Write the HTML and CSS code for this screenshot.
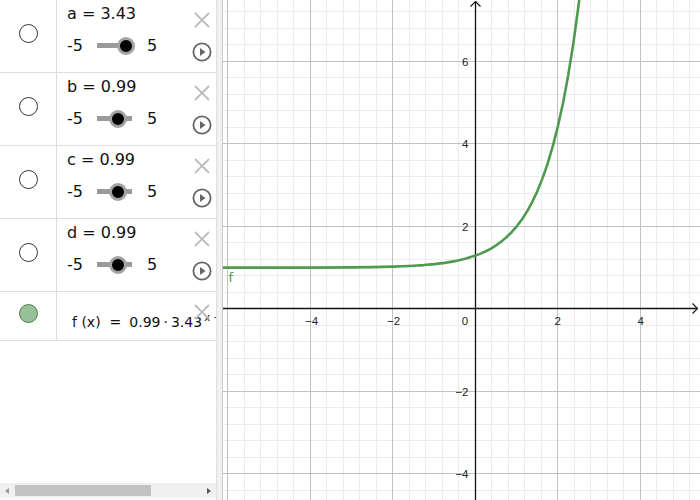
FILE: index.html
```html
<!DOCTYPE html>
<html>
<head>
<meta charset="utf-8">
<link rel="stylesheet" href="styles.css">
</head>
<body>
<div class="app">
  <div class="algebra">
    <div class="row">
      <div class="marble-col"><div class="marble"></div></div>
      <div class="content">
        <div class="main">
          <div class="title">a = 3.43</div>
          <div class="slider-row">
            <span>-5</span>
            <div class="slider"><div class="track"></div><div class="knob" style="left:20.5px"></div></div>
            <span class="max">5</span>
          </div>
        </div>
        <div class="icons">
          <svg class="x-icon" width="16" height="16" viewBox="0 0 16 16"><path d="M1 1L15 15M15 1L1 15"/></svg>
          <svg class="play" width="20" height="20" viewBox="0 0 20 20"><circle cx="10" cy="10" r="8.6"/><path d="M8 6V14L13.5 10Z"/></svg>
        </div>
      </div>
    </div>
    <div class="row">
      <div class="marble-col"><div class="marble"></div></div>
      <div class="content">
        <div class="main">
          <div class="title">b = 0.99</div>
          <div class="slider-row">
            <span>-5</span>
            <div class="slider"><div class="track"></div><div class="knob" style="left:12px"></div></div>
            <span class="max">5</span>
          </div>
        </div>
        <div class="icons">
          <svg class="x-icon" width="16" height="16" viewBox="0 0 16 16"><path d="M1 1L15 15M15 1L1 15"/></svg>
          <svg class="play" width="20" height="20" viewBox="0 0 20 20"><circle cx="10" cy="10" r="8.6"/><path d="M8 6V14L13.5 10Z"/></svg>
        </div>
      </div>
    </div>
    <div class="row">
      <div class="marble-col"><div class="marble"></div></div>
      <div class="content">
        <div class="main">
          <div class="title">c = 0.99</div>
          <div class="slider-row">
            <span>-5</span>
            <div class="slider"><div class="track"></div><div class="knob" style="left:12px"></div></div>
            <span class="max">5</span>
          </div>
        </div>
        <div class="icons">
          <svg class="x-icon" width="16" height="16" viewBox="0 0 16 16"><path d="M1 1L15 15M15 1L1 15"/></svg>
          <svg class="play" width="20" height="20" viewBox="0 0 20 20"><circle cx="10" cy="10" r="8.6"/><path d="M8 6V14L13.5 10Z"/></svg>
        </div>
      </div>
    </div>
    <div class="row">
      <div class="marble-col"><div class="marble"></div></div>
      <div class="content">
        <div class="main">
          <div class="title">d = 0.99</div>
          <div class="slider-row">
            <span>-5</span>
            <div class="slider"><div class="track"></div><div class="knob" style="left:12px"></div></div>
            <span class="max">5</span>
          </div>
        </div>
        <div class="icons">
          <svg class="x-icon" width="16" height="16" viewBox="0 0 16 16"><path d="M1 1L15 15M15 1L1 15"/></svg>
          <svg class="play" width="20" height="20" viewBox="0 0 20 20"><circle cx="10" cy="10" r="8.6"/><path d="M8 6V14L13.5 10Z"/></svg>
        </div>
      </div>
    </div>
    <div class="row fn">
      <div class="marble-col"><div class="marble filled"></div></div>
      <div class="content">
        <div class="fn-text">f (x)<span class="eq">=</span>0.99<span class="dot">·</span>3.43<sup>x − 0.99</sup> + 0.99</div>
      </div>
      <svg class="x-icon fn-x" width="16" height="16" viewBox="0 0 16 16"><path d="M1 1L15 15M15 1L1 15"/></svg>
    </div>
    <div class="hscroll">
      <span class="arr-left"></span>
      <span class="thumb"></span>
      <span class="arr-right"></span>
    </div>
  </div>
  <div class="split"></div>
  <svg class="graph" width="477" height="500" viewBox="0 0 477 500">
    <path class="minor" d="M21.5 0V500M37.5 0V500M54.5 0V500M70.5 0V500M103.5 0V500M120.5 0V500M136.5 0V500M153.5 0V500M186.5 0V500M202.5 0V500M219.5 0V500M235.5 0V500M268.5 0V500M285.5 0V500M301.5 0V500M318.5 0V500M351.5 0V500M367.5 0V500M384.5 0V500M400.5 0V500M433.5 0V500M450.5 0V500M466.5 0V500M0 11.5H477M0 28.5H477M0 44.5H477M0 77.5H477M0 94.5H477M0 110.5H477M0 127.5H477M0 160.5H477M0 176.5H477M0 193.5H477M0 209.5H477M0 242.5H477M0 259.5H477M0 275.5H477M0 292.5H477M0 325.5H477M0 341.5H477M0 358.5H477M0 374.5H477M0 407.5H477M0 424.5H477M0 440.5H477M0 457.5H477M0 490.5H477"/>
    <path class="major" d="M4.5 0V500M87.5 0V500M169.5 0V500M334.5 0V500M417.5 0V500M0 61.5H477M0 143.5H477M0 226.5H477M0 391.5H477M0 473.5H477"/>
    <path class="axis" d="M252.5 1.5V500M0 308.5H475"/>
    <path class="arrow" d="M247.5 6.5L252.5 1.5L257.5 6.5M469.5 303.5L474.5 308.5L469.5 313.5"/>
    <g class="labels">
      <text x="88.5" y="324.5" text-anchor="middle">−4</text>
      <text x="170.5" y="324.5" text-anchor="middle">−2</text>
      <text x="242" y="324.5" text-anchor="middle">0</text>
      <text x="334.8" y="324.5" text-anchor="middle">2</text>
      <text x="417.8" y="324.5" text-anchor="middle">4</text>
      <text x="245.5" y="66" text-anchor="end">6</text>
      <text x="245.5" y="148" text-anchor="end">4</text>
      <text x="245.5" y="231" text-anchor="end">2</text>
      <text x="245.5" y="396" text-anchor="end">−2</text>
      <text x="245.5" y="478" text-anchor="end">−4</text>
    </g>
    <polyline class="curve" points="-2,267.65 87.5,267.58 128.75,267.37 149.4,267.11 170,266.64 180.31,266.27 190.6,265.76 200.94,265.08 211.25,264.15 221.56,262.88 231.9,261.15 242.19,258.81 252.5,255.61 257.66,253.6 262.8,251.26 267.97,248.53 273.1,245.34 278.28,241.62 283.4,237.28 288.59,232.22 293.75,226.32 298.9,219.44 304.1,211.4 309.2,202.03 314.4,191.1 319.5,178.36 324.7,163.46 329.8,146.1 335,125.84 340.2,102.21 345.3,74.65 350.5,42.52 355.6,4.98 359.75,-29.46"/>
    <text class="flabel" x="5.5" y="281.5">f</text>
  </svg>
</div>
</body>
</html>
```

FILE: styles.css
```css
html, body {
  margin: 0;
  padding: 0;
  background: #fff;
}

body {
  font-family: "DejaVu Sans", "Liberation Sans", sans-serif;
  color: #111;
}

.app {
  display: flex;
  width: 700px;
  height: 500px;
  overflow: hidden;
}

.algebra {
  width: 216px;
  flex: none;
  display: flex;
  flex-direction: column;
  background: #fff;
  overflow: hidden;
}

.row {
  display: flex;
  height: 72px;
  border-bottom: 1px solid #dddddd;
  flex: none;
  position: relative;
}

.row.fn {
  height: 48px;
}

.marble-col {
  width: 56px;
  flex: none;
  border-right: 1px solid #dddddd;
  display: flex;
  justify-content: center;
  align-items: flex-start;
}

.marble {
  width: 19px;
  height: 19px;
  box-sizing: border-box;
  border: 1px solid #333;
  border-radius: 50%;
  background: #fff;
  margin-top: 24px;
}

.marble.filled {
  margin-top: 12px;
  background: #99c199;
  border-color: #4b7f4b;
}

.content {
  flex: 1;
  min-width: 0;
  display: flex;
  padding-left: 10px;
  overflow: hidden;
}

.main {
  flex: 1;
  padding-top: 4px;
}

.title {
  font-size: 16px;
  line-height: 20px;
  height: 20px;
  white-space: nowrap;
}

.slider-row {
  display: flex;
  align-items: flex-start;
  margin-top: 12px;
  height: 20px;
  font-size: 16px;
  line-height: 20px;
}

.slider {
  position: relative;
  width: 35px;
  height: 20px;
  margin-left: 14px;
}

.track {
  position: absolute;
  left: 0;
  right: 0;
  top: 7px;
  height: 5px;
  background: #9a9a9a;
}

.knob {
  position: absolute;
  top: 1px;
  width: 18px;
  height: 18px;
  box-sizing: border-box;
  border-radius: 50%;
  border: 3px solid #a3a3a3;
  background: #000;
}

.max {
  margin-left: 15px;
}

.icons {
  width: 20px;
  flex: none;
  margin-right: 4px;
  display: flex;
  flex-direction: column;
  align-items: center;
}

.x-icon {
  display: block;
  margin-top: 12px;
}

.x-icon path {
  stroke: #bdbdbd;
  stroke-width: 1.8;
  fill: none;
}

.play {
  display: block;
  margin-top: 14px;
}

.play circle {
  fill: none;
  stroke: #666;
  stroke-width: 1.8;
}

.play path {
  fill: #666;
}

.fn-text {
  padding-left: 5px;
  padding-top: 20px;
  font-size: 14px;
  line-height: 20px;
  white-space: nowrap;
}

.fn-text .eq {
  margin: 0 8px 0 9px;
}

.fn-text .dot {
  margin: 0 3px;
}

.fn-text sup {
  font-size: 10px;
  line-height: 0;
  margin-left: 2px;
}

.fn-x {
  position: absolute;
  left: 194px;
  top: 0;
}

.hscroll {
  margin-top: auto;
  margin-bottom: 2px;
  height: 15px;
  flex: none;
  background: #f0f0f0;
  display: flex;
  align-items: center;
}

.arr-left {
  width: 0;
  height: 0;
  margin-left: 5px;
  border-top: 3px solid transparent;
  border-bottom: 3px solid transparent;
  border-right: 4px solid #9a9a9a;
}

.thumb {
  width: 136px;
  height: 11px;
  margin-left: 6px;
  background: #c2c2c2;
}

.arr-right {
  width: 0;
  height: 0;
  margin-left: auto;
  margin-right: 5px;
  border-top: 3.5px solid transparent;
  border-bottom: 3.5px solid transparent;
  border-left: 4px solid #555;
}

.split {
  width: 5px;
  flex: none;
  background: #f1f1f1;
  border-left: 1px solid #dedede;
  border-right: 1px solid #c9c9c9;
}

.graph {
  display: block;
  flex: none;
  background: #fff;
}

.minor {
  stroke: #ececec;
  stroke-width: 1;
  fill: none;
  shape-rendering: crispEdges;
}

.major {
  stroke: #c2c2c2;
  stroke-width: 1;
  fill: none;
  shape-rendering: crispEdges;
}

.axis {
  stroke: #111;
  stroke-width: 1.3;
  fill: none;
}

.arrow {
  stroke: #111;
  stroke-width: 1.1;
  fill: none;
}

.labels text {
  font-family: "Liberation Sans", Arial, sans-serif;
  font-size: 11.5px;
  fill: #222;
}

.curve {
  fill: none;
  stroke: #4f9a4f;
  stroke-width: 2.6;
  stroke-linejoin: round;
  stroke-linecap: round;
}

.flabel {
  font-family: "DejaVu Sans", sans-serif;
  font-size: 13px;
  fill: #4f9a4f;
}
```
